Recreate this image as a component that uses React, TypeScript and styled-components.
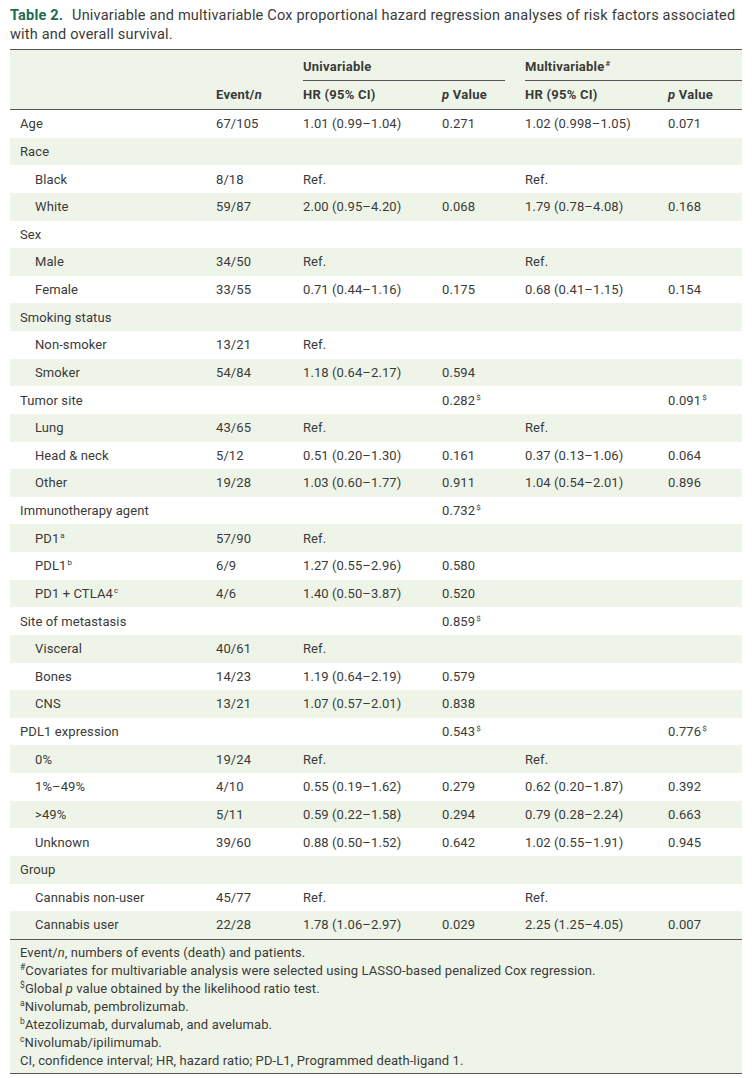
import React from "react";
import styled, { createGlobalStyle } from "styled-components";

const Global = createGlobalStyle`
  html, body { margin: 0; padding: 0; background: #fff; }
  body { font-family: Roboto, "Noto Sans", "Liberation Sans", sans-serif; color: #3a3a3a; }
`;

const Page = styled.div`
  padding: 7px 11px 0 10px;
  width: 732px;
`;

const Title = styled.div`
  font-size: 14.5px;
  letter-spacing: 0.2px;
  line-height: 18.5px;
  color: #3a3a3a;
  margin-bottom: 5px;
`;

const TitleLine = styled.div`
  white-space: nowrap;
`;

const TitleLabel = styled.span`
  color: #1d6b52;
  font-weight: 700;
  margin-right: 5px;
`;

const Table = styled.table`
  width: 732px;
  border-collapse: collapse;
  table-layout: fixed;
  font-size: 13px;
  letter-spacing: 0.1px;
  color: #3a3a3a;
`;

const Head = styled.thead`
  background: #eef5e8;
  border-top: 1.5px solid #555;
  border-bottom: 1.5px solid #555;
`;

const HeadCell = styled.th<{ $bottom?: boolean }>`
  text-align: left;
  font-weight: 700;
  letter-spacing: 0.25px;
  padding: 0 10px;
  vertical-align: ${(p) => (p.$bottom ? "bottom" : "middle")};
  height: 28px;
  line-height: 28px;
`;

const GroupCell = styled.th`
  text-align: left;
  font-weight: 700;
  letter-spacing: 0.25px;
  padding: 0;
  height: 31px;
  vertical-align: bottom;
`;

const GroupLabel = styled.div<{ $last?: boolean }>`
  margin: 0 ${(p) => (p.$last ? "0" : "10px")} 0 10px;
  border-bottom: 1px solid #555;
  height: 30px;
  line-height: 34px;
`;

const Row = styled.tr<{ $shade: boolean }>`
  background: ${(p) => (p.$shade ? "#eef5e8" : "#ffffff")};
`;

const Cell = styled.td<{ $indent?: boolean }>`
  padding: 0 10px 0 ${(p) => (p.$indent ? "25px" : "10px")};
  height: 27.63px;
  white-space: nowrap;
  vertical-align: middle;
`;

const Body = styled.tbody`
  border-bottom: 1.5px solid #555;
`;

const Foot = styled.div`
  background: #eef5e8;
  border-bottom: 1.5px solid #555;
  padding: 4px 10px 3px;
  font-size: 13px;
  letter-spacing: 0.1px;
  line-height: 18px;
  color: #3a3a3a;
`;

const FootLine = styled.div``;

const Sup = styled.sup`
  font-size: 8px;
  vertical-align: 5px;
  line-height: 0;
  margin-left: 1px;
`;

const FootSup = styled.sup`
  font-size: 8.5px;
  vertical-align: 5px;
  line-height: 0;
`;

type R = {
  label: React.ReactNode;
  indent?: boolean;
  ev?: string;
  hr?: string;
  p?: React.ReactNode;
  mhr?: string;
  mp?: React.ReactNode;
};

const G = (v: string) => (
  <>
    {v}
    <Sup>$</Sup>
  </>
);

const rows: R[] = [
  { label: "Age", ev: "67/105", hr: "1.01 (0.99–1.04)", p: "0.271", mhr: "1.02 (0.998–1.05)", mp: "0.071" },
  { label: "Race" },
  { label: "Black", indent: true, ev: "8/18", hr: "Ref.", mhr: "Ref." },
  { label: "White", indent: true, ev: "59/87", hr: "2.00 (0.95–4.20)", p: "0.068", mhr: "1.79 (0.78–4.08)", mp: "0.168" },
  { label: "Sex" },
  { label: "Male", indent: true, ev: "34/50", hr: "Ref.", mhr: "Ref." },
  { label: "Female", indent: true, ev: "33/55", hr: "0.71 (0.44–1.16)", p: "0.175", mhr: "0.68 (0.41–1.15)", mp: "0.154" },
  { label: "Smoking status" },
  { label: "Non-smoker", indent: true, ev: "13/21", hr: "Ref." },
  { label: "Smoker", indent: true, ev: "54/84", hr: "1.18 (0.64–2.17)", p: "0.594" },
  { label: "Tumor site", p: G("0.282"), mp: G("0.091") },
  { label: "Lung", indent: true, ev: "43/65", hr: "Ref.", mhr: "Ref." },
  { label: "Head & neck", indent: true, ev: "5/12", hr: "0.51 (0.20–1.30)", p: "0.161", mhr: "0.37 (0.13–1.06)", mp: "0.064" },
  { label: "Other", indent: true, ev: "19/28", hr: "1.03 (0.60–1.77)", p: "0.911", mhr: "1.04 (0.54–2.01)", mp: "0.896" },
  { label: "Immunotherapy agent", p: G("0.732") },
  { label: <>PD1<Sup>a</Sup></>, indent: true, ev: "57/90", hr: "Ref." },
  { label: <>PDL1<Sup>b</Sup></>, indent: true, ev: "6/9", hr: "1.27 (0.55–2.96)", p: "0.580" },
  { label: <>PD1 + CTLA4<Sup>c</Sup></>, indent: true, ev: "4/6", hr: "1.40 (0.50–3.87)", p: "0.520" },
  { label: "Site of metastasis", p: G("0.859") },
  { label: "Visceral", indent: true, ev: "40/61", hr: "Ref." },
  { label: "Bones", indent: true, ev: "14/23", hr: "1.19 (0.64–2.19)", p: "0.579" },
  { label: "CNS", indent: true, ev: "13/21", hr: "1.07 (0.57–2.01)", p: "0.838" },
  { label: "PDL1 expression", p: G("0.543"), mp: G("0.776") },
  { label: "0%", indent: true, ev: "19/24", hr: "Ref.", mhr: "Ref." },
  { label: "1%–49%", indent: true, ev: "4/10", hr: "0.55 (0.19–1.62)", p: "0.279", mhr: "0.62 (0.20–1.87)", mp: "0.392" },
  { label: ">49%", indent: true, ev: "5/11", hr: "0.59 (0.22–1.58)", p: "0.294", mhr: "0.79 (0.28–2.24)", mp: "0.663" },
  { label: "Unknown", indent: true, ev: "39/60", hr: "0.88 (0.50–1.52)", p: "0.642", mhr: "1.02 (0.55–1.91)", mp: "0.945" },
  { label: "Group" },
  { label: "Cannabis non-user", indent: true, ev: "45/77", hr: "Ref.", mhr: "Ref." },
  { label: "Cannabis user", indent: true, ev: "22/28", hr: "1.78 (1.06–2.97)", p: "0.029", mhr: "2.25 (1.25–4.05)", mp: "0.007" },
];

export default function App() {
  return (
    <Page>
      <Global />
      <Title>
        <TitleLine>
          <TitleLabel>Table 2.</TitleLabel> Univariable and multivariable Cox proportional hazard regression analyses of
          risk factors associated
        </TitleLine>
        <TitleLine>with and overall survival.</TitleLine>
      </Title>
      <Table>
        <colgroup>
          <col style={{ width: 196 }} />
          <col style={{ width: 87 }} />
          <col style={{ width: 139 }} />
          <col style={{ width: 83 }} />
          <col style={{ width: 143 }} />
          <col style={{ width: 84 }} />
        </colgroup>
        <Head>
          <tr>
            <HeadCell rowSpan={2} $bottom />
            <HeadCell rowSpan={2} $bottom>
              Event/<i>n</i>
            </HeadCell>
            <GroupCell colSpan={2}>
              <GroupLabel>Univariable</GroupLabel>
            </GroupCell>
            <GroupCell colSpan={2}>
              <GroupLabel $last>
                Multivariable<Sup>#</Sup>
              </GroupLabel>
            </GroupCell>
          </tr>
          <tr>
            <HeadCell>HR (95% CI)</HeadCell>
            <HeadCell>
              <i>p</i> Value
            </HeadCell>
            <HeadCell>HR (95% CI)</HeadCell>
            <HeadCell>
              <i>p</i> Value
            </HeadCell>
          </tr>
        </Head>
        <Body>
          {rows.map((r, i) => (
            <Row key={i} $shade={i % 2 === 1}>
              <Cell $indent={r.indent}>{r.label}</Cell>
              <Cell>{r.ev}</Cell>
              <Cell>{r.hr}</Cell>
              <Cell>{r.p}</Cell>
              <Cell>{r.mhr}</Cell>
              <Cell>{r.mp}</Cell>
            </Row>
          ))}
        </Body>
      </Table>
      <Foot>
        <FootLine>
          Event/<i>n</i>, numbers of events (death) and patients.
        </FootLine>
        <FootLine>
          <FootSup>#</FootSup>Covariates for multivariable analysis were selected using LASSO-based penalized Cox regression.
        </FootLine>
        <FootLine>
          <FootSup>$</FootSup>Global <i>p</i> value obtained by the likelihood ratio test.
        </FootLine>
        <FootLine>
          <FootSup>a</FootSup>Nivolumab, pembrolizumab.
        </FootLine>
        <FootLine>
          <FootSup>b</FootSup>Atezolizumab, durvalumab, and avelumab.
        </FootLine>
        <FootLine>
          <FootSup>c</FootSup>Nivolumab/ipilimumab.
        </FootLine>
        <FootLine>CI, confidence interval; HR, hazard ratio; PD-L1, Programmed death-ligand 1.</FootLine>
      </Foot>
    </Page>
  );
}
